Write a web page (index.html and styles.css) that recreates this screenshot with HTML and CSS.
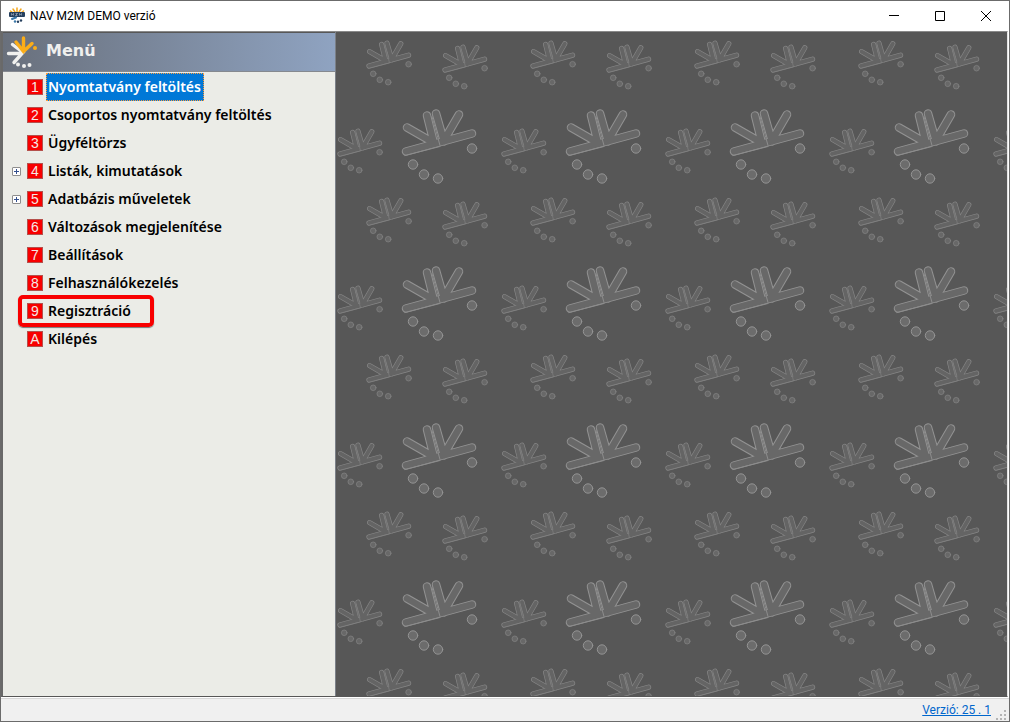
FILE: index.html
```html
<!DOCTYPE html>
<html lang="hu">
<head>
  <meta charset="UTF-8" />
  <meta name="viewport" content="width=device-width, initial-scale=1.0"/>
  <title>NAV M2M DEMO verzió</title>
  <link rel="stylesheet" href="styles.css">
</head>
<body>
  <div class="window">
    <header class="titlebar">
      <svg class="app-icon" width="16" height="16" viewBox="0 0 16 16" aria-hidden="true">
        <g stroke="#f5a81c" stroke-width="1.5" stroke-linecap="round">
          <path d="M8 1v4M4 2l2 3M12 2l-2 3M1.500 4l2 1.500M14.500 4l-2 1.500"/>
        </g>
        <rect x="0" y="5" width="16" height="5" rx="1" fill="#26405e"/>
        <path d="M2.500 8.500v-2l1 1 1-1v2M6.500 6.500h2l-2 2h2M10.500 8.500v-2l1 1 1-1v2" fill="none" stroke="#a9b6c4" stroke-width=".7"/>
        <path d="M3 12l4-1.500" stroke="#3b78a8" stroke-width="2" stroke-linecap="round"/>
        <circle cx="6" cy="14.500" r="1.200" fill="#3b78a8"/>
        <circle cx="9" cy="14.800" r="1.200" fill="#26405e"/>
        <circle cx="12" cy="13.500" r="1.200" fill="#26405e"/>
      </svg>
      <h1 class="title">NAV M2M DEMO verzió</h1>
      <div class="controls">
        <button type="button" aria-label="Kis méret"><svg width="10" height="10" viewBox="0 0 10 10"><path d="M0 4.500h10"/></svg></button>
        <button type="button" aria-label="Teljes méret"><svg width="10" height="10" viewBox="0 0 10 10"><path d="M.5 .5h9v9h-9z"/></svg></button>
        <button type="button" aria-label="Bezárás"><svg width="10" height="10" viewBox="0 0 10 10"><path d="M0 0l10 10M10 0L0 10"/></svg></button>
      </div>
    </header>

    <main class="client">
      <nav class="sidebar">
        <div class="menu-head">
          <svg width="32" height="32" viewBox="0 0 32 32" aria-hidden="true">
            <g fill="none" stroke-width="3.400" stroke-linecap="round">
              <path d="M6.500 9.500L17 17.500M2.500 18.500H16L8 27.500" stroke="#f0f0ee"/>
              <path d="M17.500 3V16.500M10 7l7.500 9.500L26 8.500" stroke="#fbad18"/>
            </g>
            <circle cx="29" cy="13" r="2" fill="#fbad18"/>
            <g fill="#f0f0ee">
              <circle cx="12" cy="29.500" r="2"/>
              <circle cx="18" cy="31" r="2"/>
              <circle cx="23.500" cy="30" r="2"/>
            </g>
          </svg>
          <h2>Menü</h2>
        </div>
        <ul class="menu">
          <li><button type="button" class="item selected"><span class="key">1</span><span class="label">Nyomtatvány feltöltés</span></button></li>
          <li><button type="button" class="item"><span class="key">2</span><span class="label">Csoportos nyomtatvány feltöltés</span></button></li>
          <li><button type="button" class="item"><span class="key">3</span><span class="label">Ügyféltörzs</span></button></li>
          <li><button type="button" class="expand" aria-label="Listák kibontása"></button><button type="button" class="item"><span class="key">4</span><span class="label">Listák, kimutatások</span></button></li>
          <li><button type="button" class="expand" aria-label="Adatbázis kibontása"></button><button type="button" class="item"><span class="key">5</span><span class="label">Adatbázis műveletek</span></button></li>
          <li><button type="button" class="item"><span class="key">6</span><span class="label">Változások megjelenítése</span></button></li>
          <li><button type="button" class="item"><span class="key">7</span><span class="label">Beállítások</span></button></li>
          <li><button type="button" class="item"><span class="key">8</span><span class="label">Felhasználókezelés</span></button></li>
          <li><button type="button" class="item marked"><span class="key">9</span><span class="label">Regisztráció</span></button></li>
          <li><button type="button" class="item"><span class="key">A</span><span class="label">Kilépés</span></button></li>
        </ul>
      </nav>

      <div class="workspace">
        <svg class="wallpaper" aria-hidden="true">
          <defs>
            <g id="rays">
              <path d="M0 0L66 -18M1 -24L29 -8M21 -36L28 -8M30 -38L38 -10M53 -37L39 -13"/>
            </g>
            <!-- origin is the left end of the long bar -->
            <g id="burst" stroke-linecap="round">
              <use href="#rays" stroke="#929292" stroke-width="8.500"/>
              <use href="#rays" stroke="#686868" stroke-width="6.500"/>
              <path d="M26 -35L34 -6M-1 4L34 -5" stroke="#8c8c8c" stroke-width="1"/>
              <g fill="#6c6c6c" stroke="#929292" stroke-width="1">
                <circle cx="7" cy="13" r="4.700"/>
                <circle cx="18" cy="23" r="4.700"/>
                <circle cx="32" cy="27" r="4.700"/>
                <circle cx="66" cy="-3" r="4.700"/>
              </g>
            </g>
            <pattern id="tile" width="164" height="157" patternUnits="userSpaceOnUse">
              <use href="#burst" transform="translate(70 119.500)"/>
              <g opacity=".8">
                <use href="#burst" transform="translate(33 34) scale(.6)"/>
                <use href="#burst" transform="translate(109 38) scale(.6)"/>
                <use href="#burst" transform="translate(4 122) scale(.6)"/>
              </g>
            </pattern>
          </defs>
          <rect width="100%" height="100%" fill="url(#tile)"/>
        </svg>
      </div>
    </main>

    <footer class="statusbar">
      <a href="#">Verzió: 25 . 1</a>
      <svg width="11" height="11" viewBox="0 0 11 11" fill="#b4b4b4" aria-hidden="true">
        <path d="M8 0h2v2h-2zM4 4h2v2h-2zM8 4h2v2h-2zM0 8h2v2h-2zM4 8h2v2h-2zM8 8h2v2h-2z"/>
      </svg>
    </footer>
  </div>
</body>
</html>
```
FILE: styles.css
```css
* {
  box-sizing: border-box;
}
body {
  margin: 0;
  font-family: Roboto, "Noto Sans", sans-serif;
  font-size: 12px;
  color: #000;
}
button {
  font: inherit;
  color: inherit;
  background: none;
  border: none;
  padding: 0;
}
.window {
  display: flex;
  flex-direction: column;
  height: 100vh;
  background: #fff;
  border: 1px solid #6b6b6b;
}

/* title bar */
.titlebar {
  display: flex;
  align-items: center;
  height: 30px;
  padding-left: 8px;
}
.app-icon {
  margin-bottom: 2px;
}
.title {
  flex: 1;
  margin: 0 0 0 5px;
  font-size: 12px;
  font-weight: 400;
}
.controls {
  display: flex;
}
.controls button {
  display: flex;
  align-items: center;
  justify-content: center;
  width: 46px;
  height: 28px;
}
.controls svg {
  fill: none;
  stroke: #000;
}

/* client area */
.client {
  flex: 1;
  display: flex;
  min-height: 0;
  margin-right: 1px;
  border: solid #696969;
  border-width: 1px 0 0 2px;
  border-top-color: #8a8a8a;
  border-right: 1px solid #e3e3e3;
  border-bottom: 1px solid #575757;
  background: #575757;
}
.sidebar {
  flex: 0 0 333px;
  background: #ebece7;
  border-right: 1px solid #7b8088;
}
.menu-head {
  display: flex;
  align-items: center;
  gap: 8px;
  height: 40px;
  padding: 0 3px 3px;
  background: linear-gradient(to right, #69707c, #8fa3c1);
  border-top: 1px solid #575757;
  border-bottom: 1px solid #85898f;
}
.menu-head svg {
  overflow: visible;
}
.menu-head h2 {
  margin: 0;
  font: bold 16px "DejaVu Sans", sans-serif;
  color: #f0f0ee;
}
.menu {
  list-style: none;
  margin: 0;
  padding: 1px 0;
}
.menu li {
  display: flex;
  align-items: center;
  justify-content: flex-start;
  height: 28px;
  padding-left: 9px;
}
.item {
  display: flex;
  align-items: center;
  gap: 3px;
  height: 28px;
  margin-left: 15px;
  font-family: "Noto Sans", sans-serif;
  font-size: 14px;
  font-weight: 600;
}
.expand + .item {
  margin-left: 6px;
}
.key {
  width: 16px;
  height: 16px;
  background: #f80000;
  border: 1px solid #b5504c;
  color: #f4e8e4;
  font: 14px/14px "Liberation Sans", sans-serif;
  text-align: center;
}
.label {
  height: 28px;
  padding: 0 1px;
  border: 1px solid transparent;
  line-height: 26px;
}
.selected .label {
  padding-right: 2px;
  background: #0078d7;
  border: 1px dotted #ff9c3a;
  color: #fff;
}
.marked {
  height: 32px;
  margin-left: 6px;
  padding: 0 17px 0 5px;
  border: 4px solid #f80000;
  border-radius: 5px;
  box-shadow: 0 1px 1px #777;
}
.expand {
  position: relative;
  width: 9px;
  height: 9px;
  background: #fff;
  border: 1px solid #8e8e8e;
  border-radius: 1px;
}
.expand::before,
.expand::after {
  content: "";
  position: absolute;
  background: #33508e;
}
.expand::before {
  left: 1px;
  top: 3px;
  width: 5px;
  height: 1px;
}
.expand::after {
  left: 3px;
  top: 1px;
  width: 1px;
  height: 5px;
}
.workspace {
  flex: 1;
  min-width: 0;
}
.wallpaper {
  display: block;
  width: 100%;
  height: 100%;
}

/* status bar */
.statusbar {
  display: flex;
  align-items: center;
  justify-content: flex-end;
  gap: 5px;
  height: 23px;
  margin-top: 1px;
  padding-right: 2px;
  background: #f0f0f0;
  border-top: 1px solid #d7d7d7;
}
.statusbar a {
  color: #0066cc;
}
.statusbar svg {
  align-self: flex-end;
}
```
